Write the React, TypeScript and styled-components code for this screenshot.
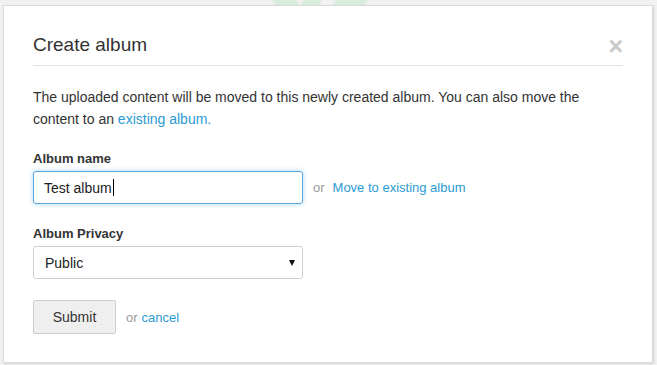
import React from "react";
import styled, { createGlobalStyle } from "styled-components";

const Global = createGlobalStyle`
  html, body { margin: 0; padding: 0; }
  body {
    background: #f1f1f1;
    font-family: "Liberation Sans", Arial, sans-serif;
    color: #333;
    width: 657px;
    height: 365px;
    overflow: hidden;
  }
`;

const Page = styled.div`
  position: relative;
  padding: 5px 4px 0 3px;
`;

const BackLogo = styled.svg`
  position: absolute;
  left: 270px;
  top: 0;
`;

const Modal = styled.div`
  position: relative;
  width: 650px;
  box-sizing: border-box;
  background: #fff;
  border: 1px solid #dadada;
  box-shadow: 1px 1px 2px rgba(0, 0, 0, 0.12);
  padding: 28px 29px 28px 29px;
`;

const Header = styled.div`
  display: flex;
  align-items: flex-start;
  justify-content: space-between;
  height: 22px;
  border-bottom: 1px solid #e3e3e3;
  padding-bottom: 9px;
`;

const Title = styled.h3`
  margin: 0;
  font-size: 19px;
  line-height: 22px;
  font-weight: normal;
  color: #333;
`;

const Close = styled.span`
  font-size: 25px;
  line-height: 22px;
  font-weight: bold;
  color: #c9c9c9;
  margin-top: 1px;
  margin-right: 0;
  cursor: pointer;
`;

const Intro = styled.p`
  margin: 20px 0 0;
  font-size: 14px;
  line-height: 22px;
`;

const Link = styled.a`
  color: #2b9bd3;
  text-decoration: none;
`;

const Label = styled.label<{ $first?: boolean }>`
  display: block;
  margin: ${(p) => (p.$first ? "20px" : "21px")} 0 3px;
  font-size: 13px;
  line-height: 18px;
  font-weight: bold;
  color: #333;
`;

const Row = styled.div`
  display: flex;
  align-items: center;
  gap: 10px;
`;

const FakeInput = styled.div`
  box-sizing: border-box;
  width: 270px;
  height: 33px;
  border: 1px solid #5aa9de;
  border-radius: 3px;
  box-shadow: 0 0 5px rgba(102, 175, 233, 0.55);
  padding: 0 10px;
  display: flex;
  align-items: center;
  font-size: 14px;
  color: #222;
`;

const Caret = styled.span`
  display: inline-block;
  width: 1px;
  height: 17px;
  background: #000;
  margin-left: 1px;
`;

const Or = styled.span`
  color: #999;
  font-size: 13px;
`;

const SmallLink = styled(Link)`
  font-size: 13px;
`;

const SelectWrap = styled.div`
  position: relative;
  width: 270px;
`;

const Select = styled.select`
  appearance: none;
  -webkit-appearance: none;
  box-sizing: border-box;
  display: block;
  width: 270px;
  height: 33px;
  border: 1px solid #cfcfcf;
  border-radius: 3px;
  background: #fff;
  padding: 0 11px;
  font-family: "Liberation Sans", Arial, sans-serif;
  font-size: 14px;
  color: #222;
  outline: none;
`;

const Arrow = styled.span`
  position: absolute;
  right: 8px;
  top: 14px;
  width: 0;
  height: 0;
  border-left: 3px solid transparent;
  border-right: 3px solid transparent;
  border-top: 6px solid #111;
  pointer-events: none;
`;

const Actions = styled.div`
  display: flex;
  align-items: center;
  gap: 10px;
  margin-top: 21px;
`;

const Button = styled.button`
  box-sizing: border-box;
  width: 83px;
  height: 34px;
  border: 1px solid #cdcdcd;
  border-radius: 2px;
  background: #efefef;
  font-family: "Liberation Sans", Arial, sans-serif;
  font-size: 14px;
  color: #333;
  padding: 0;
`;

const Inline = styled.span<{ $gap: number }>`
  font-size: 13px;
  display: flex;
  gap: ${(p) => p.$gap}px;
`;

export default function App() {
  return (
    <>
      <Global />
      <Page>
        <BackLogo width="100" height="6" viewBox="0 0 100 6">
          <polygon points="2,0 26,0 30,6 6,6" fill="#d8eddc" />
          <polygon points="34,0 52,0 48,6 30,6" fill="#d8eddc" />
          <polygon points="66,0 98,0 94,6 62,6" fill="#d8eddc" />
        </BackLogo>
        <Modal>
          <Header>
            <Title>Create album</Title>
            <Close>×</Close>
          </Header>
          <Intro>
            The uploaded content will be moved to this newly created album. You can also move the
            content to an <Link href="#">existing album.</Link>
          </Intro>
          <Label $first>Album name</Label>
          <Row>
            <FakeInput>
              Test album
              <Caret />
            </FakeInput>
            <Inline $gap={8}>
              <Or>or</Or>
              <SmallLink href="#">Move to existing album</SmallLink>
            </Inline>
          </Row>
          <Label>Album Privacy</Label>
          <SelectWrap>
            <Select defaultValue="public">
              <option value="public">Public</option>
              <option value="private">Private</option>
            </Select>
            <Arrow />
          </SelectWrap>
          <Actions>
            <Button>Submit</Button>
            <Inline $gap={4}>
              <Or>or</Or>
              <SmallLink href="#">cancel</SmallLink>
            </Inline>
          </Actions>
        </Modal>
      </Page>
    </>
  );
}
